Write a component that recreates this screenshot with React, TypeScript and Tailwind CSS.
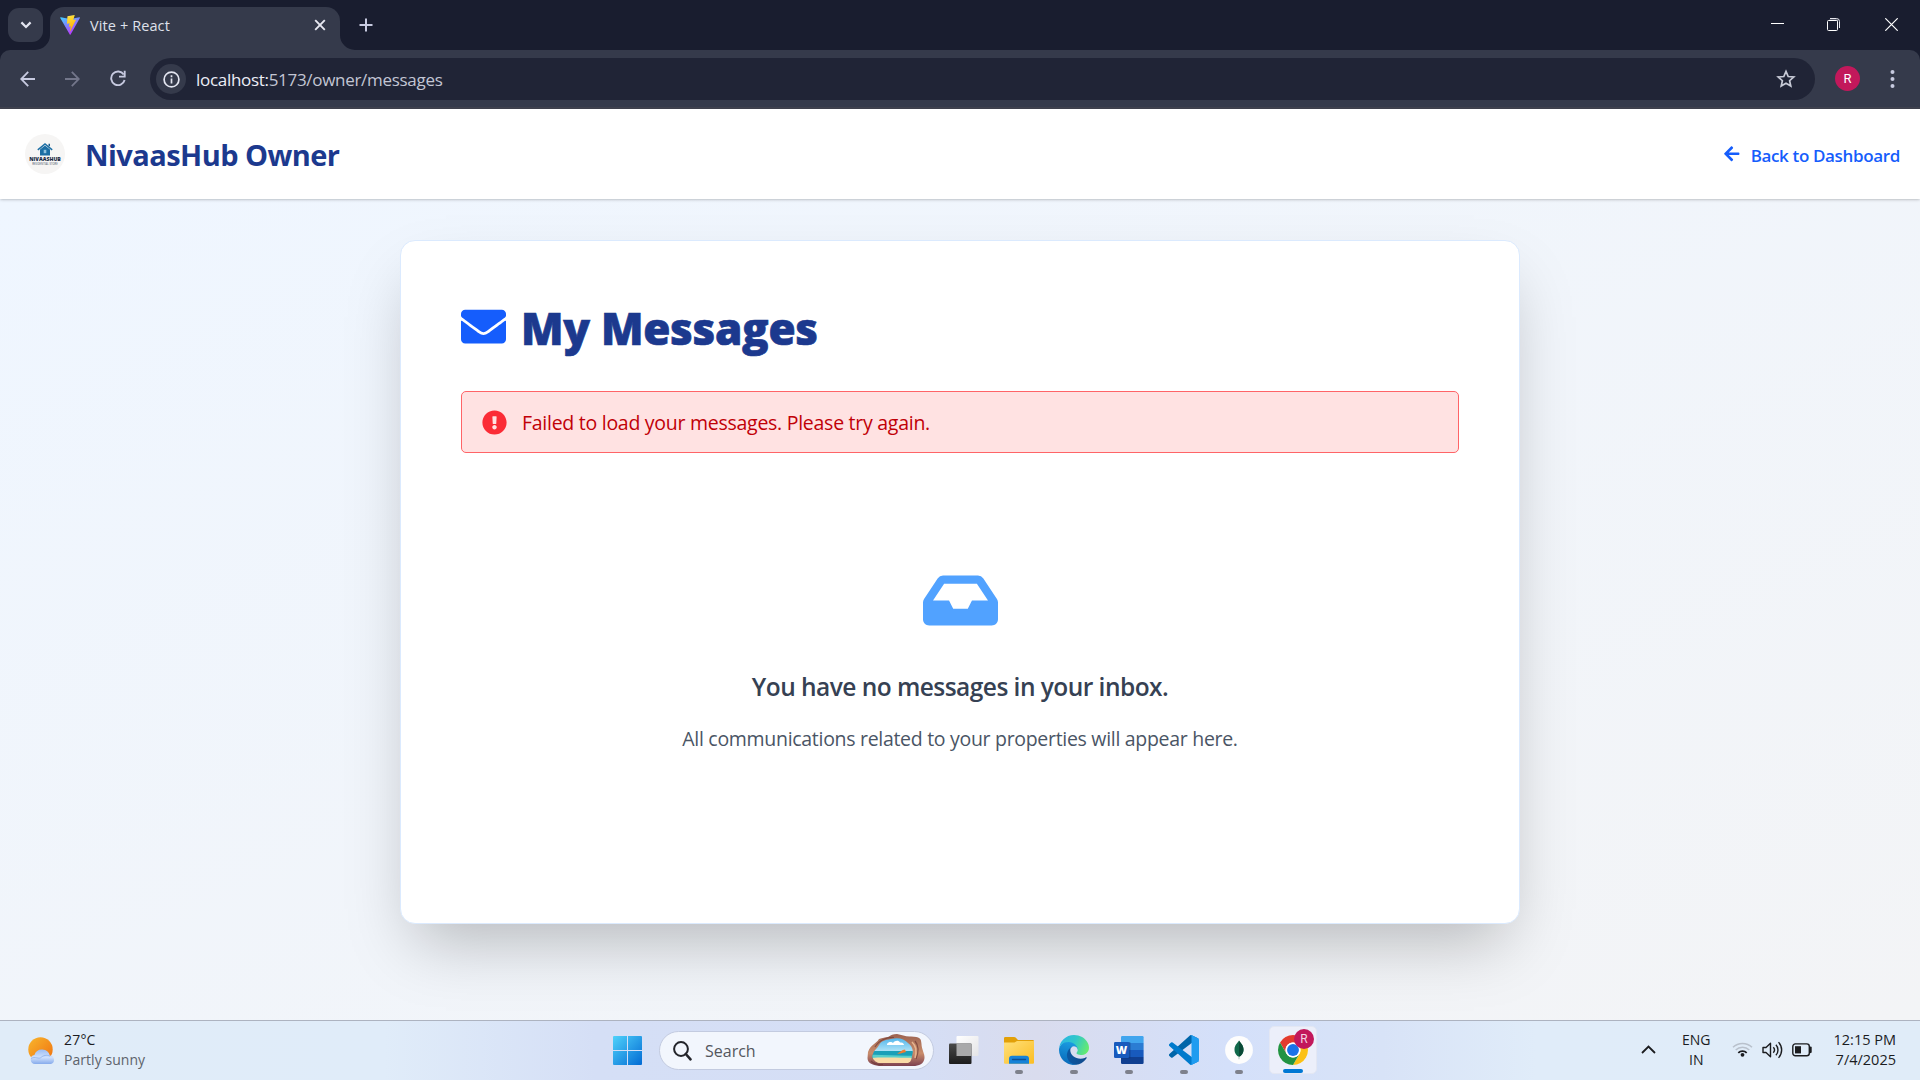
import React from "react";
import { FaArrowLeft, FaEnvelope, FaExclamationCircle, FaInbox } from "react-icons/fa";

function ViteLogo() {
  return (
    <svg width="20" height="20" viewBox="0 0 32 32" fill="none">
      <defs>
        <linearGradient id="va" x1="0" y1="0" x2="0.55" y2="1">
          <stop offset="0" stopColor="#41d1ff" />
          <stop offset="1" stopColor="#bd34fe" />
        </linearGradient>
        <linearGradient id="vb" x1="0.4" y1="0" x2="0.6" y2="1">
          <stop offset="0" stopColor="#ffea83" />
          <stop offset="0.1" stopColor="#ffdd35" />
          <stop offset="1" stopColor="#ffa800" />
        </linearGradient>
      </defs>
      <path d="M31.8 4.9 17 31.3a.8.8 0 0 1-1.4 0L.4 4.9a.8.8 0 0 1 .84-1.2L16.2 6.4h.3L31 3.7a.8.8 0 0 1 .8 1.2z" fill="url(#va)" />
      <path d="M23 .01 12.2 2.1a.4.4 0 0 0-.32.37l-.66 11.2a.4.4 0 0 0 .49.41l3-.69a.4.4 0 0 1 .48.48l-.9 4.38a.4.4 0 0 0 .51.46l1.86-.57a.4.4 0 0 1 .51.47l-1.42 6.9c-.09.43.48.67.72.3l.16-.25 8.8-17.6a.4.4 0 0 0-.43-.57l-3.1.6a.4.4 0 0 1-.46-.5l2.03-7a.4.4 0 0 0-.47-.5z" fill="url(#vb)" />
    </svg>
  );
}

function TabStrip() {
  return (
    <div className="flex h-[50px] bg-[#191d2f] pl-2">
      <div className="mt-2 flex h-[34px] w-[35px] items-center justify-center rounded-[11px] bg-[#353a4b]">
        <svg width="12" height="8" viewBox="0 0 12 8" fill="none" stroke="#e3e5f0" strokeWidth="2.2">
          <path d="M1.4 1.4 6 6l4.600-4.600" />
        </svg>
      </div>
      <svg className="-ml-2 mt-auto" width="15" height="15" viewBox="0 0 15 15" fill="#353a4b">
        <path d="M15 0v15H0A15 15 0 0 0 15 0z" />
      </svg>
      <div className="mt-[7px] flex h-[43px] w-[290px] items-center rounded-t-[14px] bg-[#353a4b] pl-[10px] pb-[7px]">
        <ViteLogo />
        <span className="ml-[10px] mt-[2px] whitespace-nowrap text-[14.500px] leading-5 tracking-[0.1px] text-[#dfe1ec]">Vite + React</span>
        <svg className="ml-auto mr-[14px]" width="12" height="12" viewBox="0 0 12 12" stroke="#e8e9f2" strokeWidth="1.900">
          <path d="M1.200 1.200 10.800 10.800M10.800 1.200 1.200 10.800" />
        </svg>
      </div>
      <svg className="mt-auto" width="15" height="15" viewBox="0 0 15 15" fill="#353a4b">
        <path d="M0 0v15h15A15 15 0 0 1 0 0z" />
      </svg>
      <svg className="ml-[4px] mt-[18px]" width="14" height="14" viewBox="0 0 14 14" stroke="#c7cae0" strokeWidth="2">
        <path d="M7 .5v13M.5 7h13" />
      </svg>
      <div className="ml-auto mt-[18px] flex h-[13px] pr-[22px]">
        <svg width="13" height="13" viewBox="0 0 13 13" stroke="#fff"><path d="M0 5.500h13" /></svg>
        <svg className="ml-[43px]" width="13" height="13" viewBox="0 0 13 13" fill="none">
          <path d="M3 .5h6.500a3 3 0 0 1 3 3V10" stroke="#e6e7ee" />
          <path d="M2.500 2h8v8.500" stroke="#8a8d9b" />
          <rect x=".5" y="2.500" width="10" height="10" rx="1" stroke="#fff" />
        </svg>
        <svg className="ml-[45px]" width="13" height="13" viewBox="0 0 13 13" stroke="#fff" strokeWidth="1.200"><path d="m.3.3 12.400 12.400M12.700.3.3 12.700" /></svg>
      </div>
    </div>
  );
}

function Toolbar() {
  return (
    <div className="h-[59px] bg-[#191d2f]">
      <div className="flex h-[59px] rounded-t-[10px] border-b-2 border-[#40424f] bg-[#353a4b] pl-5 pt-2">
        <svg className="mt-[13px]" width="15" height="16" viewBox="0 0 15 16" fill="none" stroke="#c7cae0" strokeWidth="1.800">
          <path d="M15 8H1.500M8.200.9 1.200 8l7 7.100" />
        </svg>
        <svg className="ml-[30px] mt-[13px]" width="15" height="16" viewBox="0 0 15 16" fill="none" stroke="#73768a" strokeWidth="1.800">
          <path d="M0 8h13.500M6.800.9l7 7.100-7 7.100" />
        </svg>
        <svg className="ml-[30px] mt-[12px]" width="16" height="17" viewBox="0 0 16 17" fill="none" stroke="#c7cae0" strokeWidth="1.900">
          <path d="M13.700 4.600A6.800 6.800 0 1 0 14.600 10" />
          <path d="M14.700.7v5.900H9" />
        </svg>
        <div className="ml-[24px] flex h-[42px] w-[1665px] items-center rounded-full bg-[#202436] pl-[6px] pr-[19px]">
          <div className="flex size-[30px] items-center justify-center rounded-full bg-[#353a4b]">
            <svg width="17" height="17" viewBox="0 0 17 17" fill="none" stroke="#e3e5f0" strokeWidth="1.700">
              <circle cx="8.500" cy="8.500" r="7.400" />
              <path d="M8.500 7.500v5M8.500 4.300v1.900" />
            </svg>
          </div>
          <span className="ml-[10px] mt-[2px] whitespace-nowrap text-[17px] leading-6 tracking-[-0.3px] text-[#c3c6d4]">
            <span className="text-[#eceef6]">localhost:</span>5173/owner/messages
          </span>
          <svg className="ml-auto" width="20" height="20" viewBox="0 0 20 20" fill="none" stroke="#c7cad6" strokeWidth="1.700">
            <path d="m10 2.400 2.200 5.100 5.600.5-4.200 3.700 1.200 5.400L10 14.200l-4.800 2.900 1.200-5.400L2.200 8l5.600-.5z" />
          </svg>
        </div>
        <div className="ml-[20px] mt-[8px] flex size-[25px] items-center justify-center rounded-full bg-[#c2185b] font-['Roboto',sans-serif] text-[13px] text-white">R</div>
        <svg className="ml-[30px] mt-[12px]" width="5" height="18" viewBox="0 0 5 18" fill="#c7cae0">
          <circle cx="2.500" cy="2" r="2" /><circle cx="2.500" cy="9" r="2" /><circle cx="2.500" cy="16" r="2" />
        </svg>
      </div>
    </div>
  );
}

function SiteLogo() {
  return (
    <div className="flex size-10 flex-col items-center rounded-full bg-[#f6f5f4] pt-[9px]">
      <svg width="16" height="13" viewBox="0 0 16 13">
        <path d="M11.500.8h1.500v2.500h-1.500z" fill="#1d5f8d" />
        <path d="M.8 6.800 8 1l7.200 5.800" fill="none" stroke="#1c6ea4" strokeWidth="1.500" />
        <path d="M3 6.600 8 2.600l5 4V12.500H3z" fill="#1c6ea4" />
        <path d="M6.700 6.800h2.600v3.400H6.700z" fill="#8fc1de" />
      </svg>
      <span className="whitespace-nowrap text-[5.200px] font-extrabold leading-[7px] text-[#1b2b44]">NIVAASHUB</span>
      <span className="whitespace-nowrap text-[2.700px] font-semibold leading-[2px] text-[#6d7785]">RESIDENTIAL STORE</span>
    </div>
  );
}

function SiteHeader() {
  return (
    <header className="z-10 flex h-[90px] items-center justify-between bg-white pl-[25px] pr-5 shadow-[0_1px_3px_rgba(0,0,0,0.16),0_1px_2px_-1px_rgba(0,0,0,0.16)]">
      <div className="flex items-center">
        <SiteLogo />
        <span className="ml-5 mt-px whitespace-nowrap text-[29px] font-bold leading-10 tracking-[-0.56px] text-[#1c398e]">NivaasHub Owner</span>
      </div>
      <a className="flex items-center text-[#155dfc]">
        <FaArrowLeft className="mb-[1px] mr-[10px] size-[17.500px]" />
        <span className="mt-[4px] whitespace-nowrap text-[17px] font-semibold leading-6 tracking-[-0.35px]">Back to Dashboard</span>
      </a>
    </header>
  );
}

function MessagesCard() {
  return (
    <section className="mx-auto mt-[41px] flex h-[684px] w-[1120px] flex-col rounded-[15px] border border-[#dbeafe] bg-white px-[60px] pt-[59px] shadow-[0_31px_62px_-15px_rgba(0,0,0,0.25)]">
      <h1 className="flex h-[57px] items-center text-[#1c398e]">
        <FaEnvelope className="mb-[5px] mr-[15px] size-[45px] text-[#155dfc]" />
        <span className="-mt-px whitespace-nowrap text-[44px] font-extrabold leading-[56px] tracking-[-0.3px] [-webkit-text-stroke:0.7px_#1c398e]">My Messages</span>
      </h1>
      <div className="mt-[34px] flex h-[62px] items-center rounded-[5px] border border-[#ff6467] bg-[#ffe2e2] pl-[20px] text-[#c10007]">
        <FaExclamationCircle className="size-[25px] text-[#fb2c36]" />
        <span className="ml-[15px] mt-px whitespace-nowrap text-[19.500px] leading-[30px] tracking-[-0.27px]">Failed to load your messages. Please try again.</span>
      </div>
      <div className="mt-[110px] flex flex-col items-center">
        <FaInbox className="size-[75px] text-[#51a2ff]" />
        <p className="mt-[31px] whitespace-nowrap text-[24.500px] font-semibold leading-[35px] tracking-[-0.540px] text-[#364153]">You have no messages in your inbox.</p>
        <p className="mt-[20px] whitespace-nowrap text-[19.500px] leading-[30px] tracking-[-0.3px] text-[#4a5565]">All communications related to your properties will appear here.</p>
      </div>
    </section>
  );
}

function WeatherIcon() {
  return (
    <svg width="28" height="28" viewBox="0 0 28 28">
      <defs>
        <linearGradient id="sun" x1="0" y1="0" x2="1" y2="1"><stop offset="0" stopColor="#f8b62d" /><stop offset="1" stopColor="#f0700f" /></linearGradient>
        <linearGradient id="cl" x1="0" y1="0" x2="0" y2="1"><stop offset="0" stopColor="#9dbdf2" /><stop offset=".55" stopColor="#cfe0fc" /><stop offset="1" stopColor="#86abec" /></linearGradient>
      </defs>
      <circle cx="12.500" cy="12.500" r="12.200" fill="url(#sun)" />
      <path d="M7 27a4.600 4.600 0 0 1-.6-9.100 8 8 0 0 1 15.400.7A4.300 4.300 0 0 1 23 27z" fill="url(#cl)" />
      <path d="M3 21.500c4-2.500 8 1 10-1s6-3 9-1.300" fill="none" stroke="#8db0ea" strokeWidth=".8" />
    </svg>
  );
}

function StartIcon() {
  return (
    <svg width="30" height="30" viewBox="0 0 30 30">
      <defs>
        <linearGradient id="win" gradientUnits="userSpaceOnUse" x1="0" y1="0" x2="30" y2="30"><stop offset="0" stopColor="#4fd2fb" /><stop offset="1" stopColor="#0067d2" /></linearGradient>
      </defs>
      <path fill="url(#win)" d="M1 0H14V14H0V1a1 1 0 0 1 1-1zM15 0h13a1 1 0 0 1 1 1V14H15zM0 15H14v14H1a1 1 0 0 1-1-1zM15 15h14v13a1 1 0 0 1-1 1H15z" />
    </svg>
  );
}

function CaveIcon() {
  return (
    <svg width="58" height="33" viewBox="0 0 58 33">
      <defs>
        <linearGradient id="rock" x1="0" y1="0" x2="0" y2="1"><stop offset="0" stopColor="#9b6250" /><stop offset=".6" stopColor="#c98d6c" /><stop offset="1" stopColor="#7d4150" /></linearGradient>
        <linearGradient id="sky" x1="0" y1="0" x2="0" y2="1"><stop offset="0" stopColor="#35a8e8" /><stop offset="1" stopColor="#b5e6f8" /></linearGradient>
        <clipPath id="hole"><path d="M6 20c1-4 4-5 6-9s6-5 12-6c8-2 13 0 17 4 4 3 6 7 4 13-1 4-1 6-4 7H12C8 28 4 24 6 20z" /></clipPath>
      </defs>
      <path d="M1 18C4 10 9 10 12 5 16 4 18 3 21 3 24 1 26 0 30 0c5 1 9 3 14 2.500C53 3 54 4 54.500 10c0 5 3.500 10 3 14C57 30 52 32 46 32H12C5 31 .5 29 .5 24z" fill="url(#rock)" />
      <g clipPath="url(#hole)">
        <path d="M0 0h58v18H0z" fill="url(#sky)" />
        <path d="M0 17h58v8H0z" fill="#1a9fb8" />
        <path d="M0 21c15-1 35 2 58 0v5H0z" fill="#58cfcb" />
        <path d="M0 24.500c15-2 30 0 58-1V33H0z" fill="#f9dba6" />
        <path d="M20 10c2-3 5-2 6-1 2-3 6-3 7-.5 3-.5 4 1.500 4 2.500H20z" fill="#fff" />
        <path d="M30 19.500c3-1 5-4 8-4l1 2.500c-3 1-6 2-9 1.500z" fill="#ef7d31" />
      </g>
      <path d="M8 13C12 6 20 3 27 3.500M48 7c5 6 3 13 1 18M4 27c3 3 7 4 12 3.500" fill="none" stroke="#6e3a35" strokeWidth="1.200" opacity=".7" />
      <path d="M45 8c4 4 5 8 3 16" fill="none" stroke="#e6b48e" strokeWidth="1.500" />
    </svg>
  );
}

function TaskViewIcon() {
  return (
    <svg width="30" height="28" viewBox="0 0 30 28">
      <defs>
        <linearGradient id="tv" x1="0" y1="0" x2="0" y2="1"><stop offset="0" stopColor="#4a4a4a" /><stop offset="1" stopColor="#1c1c1c" /></linearGradient>
        <linearGradient id="tw" x1="0" y1="0" x2="1" y2="1"><stop offset="0" stopColor="#fff" /><stop offset="1" stopColor="#e4e4e6" /></linearGradient>
      </defs>
      <rect x="7.500" y="0" width="22" height="20" rx="1" fill="url(#tw)" />
      <rect x="0" y="7.500" width="22.500" height="20.500" rx="1" fill="url(#tv)" />
      <path d="M7.500 7.500h15V20h-15z" fill="#a9a9aa" />
    </svg>
  );
}

function FolderIcon() {
  return (
    <svg width="30" height="27" viewBox="0 0 30 27">
      <defs>
        <linearGradient id="fo" x1="0" y1="0" x2="1" y2="1"><stop offset="0" stopColor="#ffe07a" /><stop offset="1" stopColor="#fbbd22" /></linearGradient>
      </defs>
      <path d="M0 1.200A1.200 1.200 0 0 1 1.200 0h9a2 2 0 0 1 1.400.6L14 3h14.800A1.200 1.200 0 0 1 30 4.200V8H0z" fill="#e2a008" />
      <path d="M0 5.500h10.500L13 4h17v21.800a1 1 0 0 1-1 1H1a1 1 0 0 1-1-1z" fill="url(#fo)" />
      <path d="M5 26.800v-5a3 3 0 0 1 3-3h14a3 3 0 0 1 3 3v5z" fill="#1683d8" />
      <path d="M8.500 22.500h13" stroke="#0d4f93" strokeWidth="1.300" strokeLinecap="round" />
    </svg>
  );
}

function EdgeIcon() {
  return (
    <svg width="30" height="30" viewBox="0 0 256 256">
      <defs>
        <linearGradient id="e1" x1="0" y1="0" x2="1" y2="0"><stop offset="0" stopColor="#0c59a4" /><stop offset="1" stopColor="#114a8b" /></linearGradient>
        <linearGradient id="e2" x1="0.500" y1="0" x2="0.300" y2="1"><stop offset="0" stopColor="#1b9de2" /><stop offset="1" stopColor="#0868b8" /></linearGradient>
        <linearGradient id="e3" x1="0" y1="0.300" x2="1" y2="0.600"><stop offset="0" stopColor="#2bb5e5" /><stop offset=".5" stopColor="#31c8c9" /><stop offset="1" stopColor="#66eb6e" /></linearGradient>
      </defs>
      <path fill="url(#e1)" d="M231 190.500c-3.400 1.800-6.900 3.400-10.500 4.700a101.700 101.700 0 0 1-35.900 6.500c-47.300 0-88.500-32.500-88.500-74.300a31.500 31.500 0 0 1 16.400-27.300c-42.800 1.800-53.800 46.400-53.800 72.500 0 73.900 68.100 81.400 82.800 81.400 7.900 0 19.800-2.300 27-4.600l1.300-.4a128.300 128.300 0 0 0 66.600-52.800 4 4 0 0 0-5.400-5.700z" />
      <path fill="url(#e2)" d="M105.700 241.400A79.200 79.200 0 0 1 83 220.100a80.700 80.700 0 0 1 29.500-120c3.200-1.500 8.500-4.200 15.600-4.100a32.400 32.400 0 0 1 25.700 13 31.900 31.900 0 0 1 6.300 18.700c0-.2 24.500-79.600-80-79.600-43.900 0-80 41.700-80 78.200a130.200 130.200 0 0 0 12.100 56 128 128 0 0 0 156.400 67 75.500 75.500 0 0 1-62.800-8z" />
      <path fill="url(#e3)" d="M152.300 148.900c-.9 1-3.400 2.500-3.400 5.600 0 2.600 1.700 5.200 4.800 7.300 14.300 10 41.400 8.600 41.500 8.600a59.600 59.600 0 0 0 30.300-8.300 61.400 61.400 0 0 0 30.400-52.900c.3-22.400-8-37.300-11.300-43.900C223.500 23.900 177.700 0 128 0A128 128 0 0 0 0 126.200c.5-36.500 36.800-66 80-66 3.500 0 23.500.3 42 10a72.600 72.600 0 0 1 30.900 29.300c6.100 10.600 7.200 24.100 7.200 29.500s-2.700 13.300-7.800 19.900z" />
    </svg>
  );
}

function WordIcon() {
  return (
    <svg width="30" height="28" viewBox="0 0 30 28">
      <path d="M7 1.200A1.200 1.200 0 0 1 8.200 0h20.200a1.200 1.200 0 0 1 1.200 1.200V7H7z" fill="#41a5ee" />
      <path d="M7 7h22.600v7H7z" fill="#2b7cd3" />
      <path d="M7 14h22.600v7H7z" fill="#185abd" />
      <path d="M7 21h22.600v5.800a1.200 1.200 0 0 1-1.200 1.200H8.200A1.200 1.200 0 0 1 7 26.800z" fill="#103f91" />
      <path d="M7 6h8.500a1 1 0 0 1 1 1v14.500a1 1 0 0 1-1 1H7z" fill="#0d3470" opacity=".45" />
      <rect x="0" y="6" width="15" height="16" rx="1.200" fill="#185abd" />
      <text x="7.500" y="18" textAnchor="middle" fontSize="11" fontWeight="800" fill="#fff" fontFamily="Open Sans, sans-serif">W</text>
    </svg>
  );
}

function VSCodeIcon() {
  return (
    <svg width="30" height="30" viewBox="0 0 100 100">
      <path fill="#0065a9" d="M96.500 10.800 75.900.9a6.200 6.200 0 0 0-7.100 1.200L1.300 63.600a4.200 4.200 0 0 0 0 6.200l5.500 5a4.200 4.200 0 0 0 5.300.2l81.200-61.600A4.200 4.200 0 0 1 100 16.800v-.3a6.200 6.200 0 0 0-3.500-5.700z" />
      <path fill="#007acc" d="m96.500 89.200-20.600 9.900a6.200 6.200 0 0 1-7.100-1.200L1.300 36.400a4.200 4.200 0 0 1 0-6.200l5.500-5a4.200 4.200 0 0 1 5.300-.2l81.200 61.600a4.200 4.200 0 0 0 6.700-3.400v.3a6.200 6.200 0 0 1-3.500 5.700z" />
      <path fill="#1f9cf0" d="M75.900 99.100a6.200 6.200 0 0 1-7.100-1.200c2.300 2.300 6.200.7 6.200-2.600V4.700c0-3.300-3.900-4.900-6.200-2.600A6.200 6.200 0 0 1 75.900.9l20.600 9.900A6.200 6.200 0 0 1 100 16.400v67.200a6.200 6.200 0 0 1-3.500 5.600z" />
    </svg>
  );
}

function MongoIcon() {
  return (
    <svg width="28" height="28" viewBox="0 0 28 28">
      <circle cx="14" cy="14" r="13.900" fill="#fdfdfd" />
      <path d="M14 4.500c.8 2 4.500 4.300 4.500 9 0 4-2.400 6-4 7.300h-1C11.900 19.500 9.500 17.500 9.500 13.500c0-4.700 3.700-7 4.500-9z" fill="#10684a" />
      <path d="M14 4.500c.8 2 4.500 4.300 4.500 9 0 4-2.400 6-4 7.300H14z" fill="#0a4a36" />
      <path d="M13.600 20h.8v3.200h-.8z" fill="#9fb7ad" />
    </svg>
  );
}

function ChromeIcon() {
  return (
    <svg width="30" height="30" viewBox="0 0 48 48">
      <circle cx="24" cy="24" r="24" fill="#fff" />
      <path d="M24 48 34.390 30A12 12 0 0 0 34.390 18L24 12H44.780A24 24 0 0 1 24 48z" fill="#fbc116" />
      <path d="M44.780 12H24A12 12 0 0 0 13.610 30L3.220 12A24 24 0 0 1 44.780 12z" fill="#e33b2e" />
      <path d="M24 48 34.390 30A12 12 0 0 1 13.610 30L3.220 12A24 24 0 0 0 24 48z" fill="#229342" />
      <circle cx="24" cy="24" r="12" fill="#fff" />
      <circle cx="24" cy="24" r="9.500" fill="#1a73e8" />
    </svg>
  );
}

function TaskApp({ children }: { children: React.ReactNode }) {
  return (
    <div className="flex h-[59px] w-[55px] flex-col items-center">
      <div className="mt-[13px] flex h-[32px] items-center justify-center">{children}</div>
      <span className="mt-[4px] h-1 w-2 rounded-full bg-[#7e818c]" />
    </div>
  );
}

function Taskbar() {
  return (
    <footer className="flex h-[60px] border-t border-[#adb3c0] bg-[linear-gradient(90deg,#e0ecf8_0%,#e0ecf9_20%,#d5dff6_31%,#d5def5_48%,#d9dcee_54%,#d4e0fa_64%,#d8e3f7_72%,#e0ecf9_80%,#e0ecf8_100%)] text-[#1b1c1f]">
      <div className="flex w-[613px] pl-7 pt-4">
        <WeatherIcon />
        <div className="-mt-[7px] ml-2 flex flex-col whitespace-nowrap text-[14px] leading-5">
          <span className="tracking-[0.200px]">27°C</span>
          <span className="tracking-[0.050px] text-[#5d636b]">Partly sunny</span>
        </div>
      </div>
      <div className="pt-[15px]"><StartIcon /></div>
      <div className="ml-[16px] mt-[10px] flex h-[39px] w-[275px] items-center rounded-full border border-[#c3cbe0] bg-[#f2f6fd] pl-[13px] pr-[8px]">
        <svg width="19" height="20" viewBox="0 0 19 20" fill="none" stroke="#23242a" strokeWidth="2">
          <circle cx="8" cy="8" r="6.900" /><path d="m12.800 13 4.700 5.300" strokeWidth="2.600" strokeLinecap="round" />
        </svg>
        <span className="ml-[13px] whitespace-nowrap text-[16px] leading-5 text-[#54575e]">Search</span>
        <span className="ml-auto"><CaveIcon /></span>
      </div>
      <div className="ml-[15px] mt-[15px] w-[30px]"><TaskViewIcon /></div>
      <div className="ml-[12px] flex">
        <TaskApp><FolderIcon /></TaskApp>
        <TaskApp><EdgeIcon /></TaskApp>
        <TaskApp><WordIcon /></TaskApp>
        <TaskApp><VSCodeIcon /></TaskApp>
        <TaskApp><MongoIcon /></TaskApp>
        <div className="relative ml-[3px] mt-[5px] flex h-[48px] w-[48px] flex-col items-center rounded-[5px] border border-[#e3e7f3] bg-[#eceffa] pt-[8px]">
          <ChromeIcon />
          <span className="mt-auto h-1 w-5 rounded-full bg-[#0078d4]" />
          <span className="absolute right-[2px] top-[2px] flex size-5 items-center justify-center rounded-full bg-[#c2185b] font-['Roboto',sans-serif] text-[12px] leading-none text-[#f3d5e2]">R</span>
        </div>
      </div>
      <div className="ml-auto flex pr-6">
        <svg className="mr-[26px] mt-[24px]" width="15" height="9" viewBox="0 0 15 9" fill="none" stroke="#1b1c1f" strokeWidth="1.800"><path d="m1 8 6.500-6.500L14 8" /></svg>
        <div className="mr-[22px] mt-[9px] flex flex-col items-center text-[14px] leading-5">
          <span>ENG</span>
          <span>IN</span>
        </div>
        <svg className="mr-[9px] mt-[20px]" width="21" height="16" viewBox="0 0 21 16" fill="none" strokeWidth="1.500">
          <path d="M1 6.300a13.500 13.500 0 0 1 19 0" stroke="#b9c1cc" /><path d="M3.700 9a9.600 9.600 0 0 1 13.600 0" stroke="#b9c1cc" />
          <path d="M6.300 11.800a6 6 0 0 1 8.400 0" stroke="#1b1c1f" strokeWidth="1.800" /><circle cx="10.500" cy="13.800" r="1.900" fill="#1b1c1f" />
        </svg>
        <svg className="mr-[9px] mt-[20px]" width="21" height="18" viewBox="0 0 21 18" fill="none" stroke="#1b1c1f" strokeWidth="1.400">
          <path d="M1 6.500h3L8.500 2.200v13.600L4 11.500H1z" strokeLinejoin="round" />
          <path d="M11.300 6.300a4 4 0 0 1 0 5.400M13.900 3.800a7.500 7.500 0 0 1 0 10.400M16.500 1.300a11 11 0 0 1 0 15.400" />
        </svg>
        <svg className="mr-[20px] mt-[22px]" width="21" height="14" viewBox="0 0 21 14" fill="none" stroke="#1b1c1f" strokeWidth="1.400">
          <rect x=".8" y=".9" width="16.500" height="11.800" rx="2.500" /><path d="M3 3.200h6v7.200H3z" fill="#1b1c1f" stroke="none" /><path d="M18.600 4.500v4.600" strokeWidth="2.200" strokeLinecap="round" />
        </svg>
        <div className="mt-[9px] flex flex-col items-end whitespace-nowrap text-[14.500px] leading-5">
          <span>12:15 PM</span>
          <span>7/4/2025</span>
        </div>
      </div>
    </footer>
  );
}

export default function App() {
  return (
    <div className="flex h-[1080px] w-[1920px] flex-col overflow-hidden font-['Open_Sans',sans-serif]">
      <TabStrip />
      <Toolbar />
      <SiteHeader />
      <main className="flex-1 bg-linear-to-br from-[#eff6ff] to-[#f3f4f6]">
        <MessagesCard />
      </main>
      <Taskbar />
    </div>
  );
}
